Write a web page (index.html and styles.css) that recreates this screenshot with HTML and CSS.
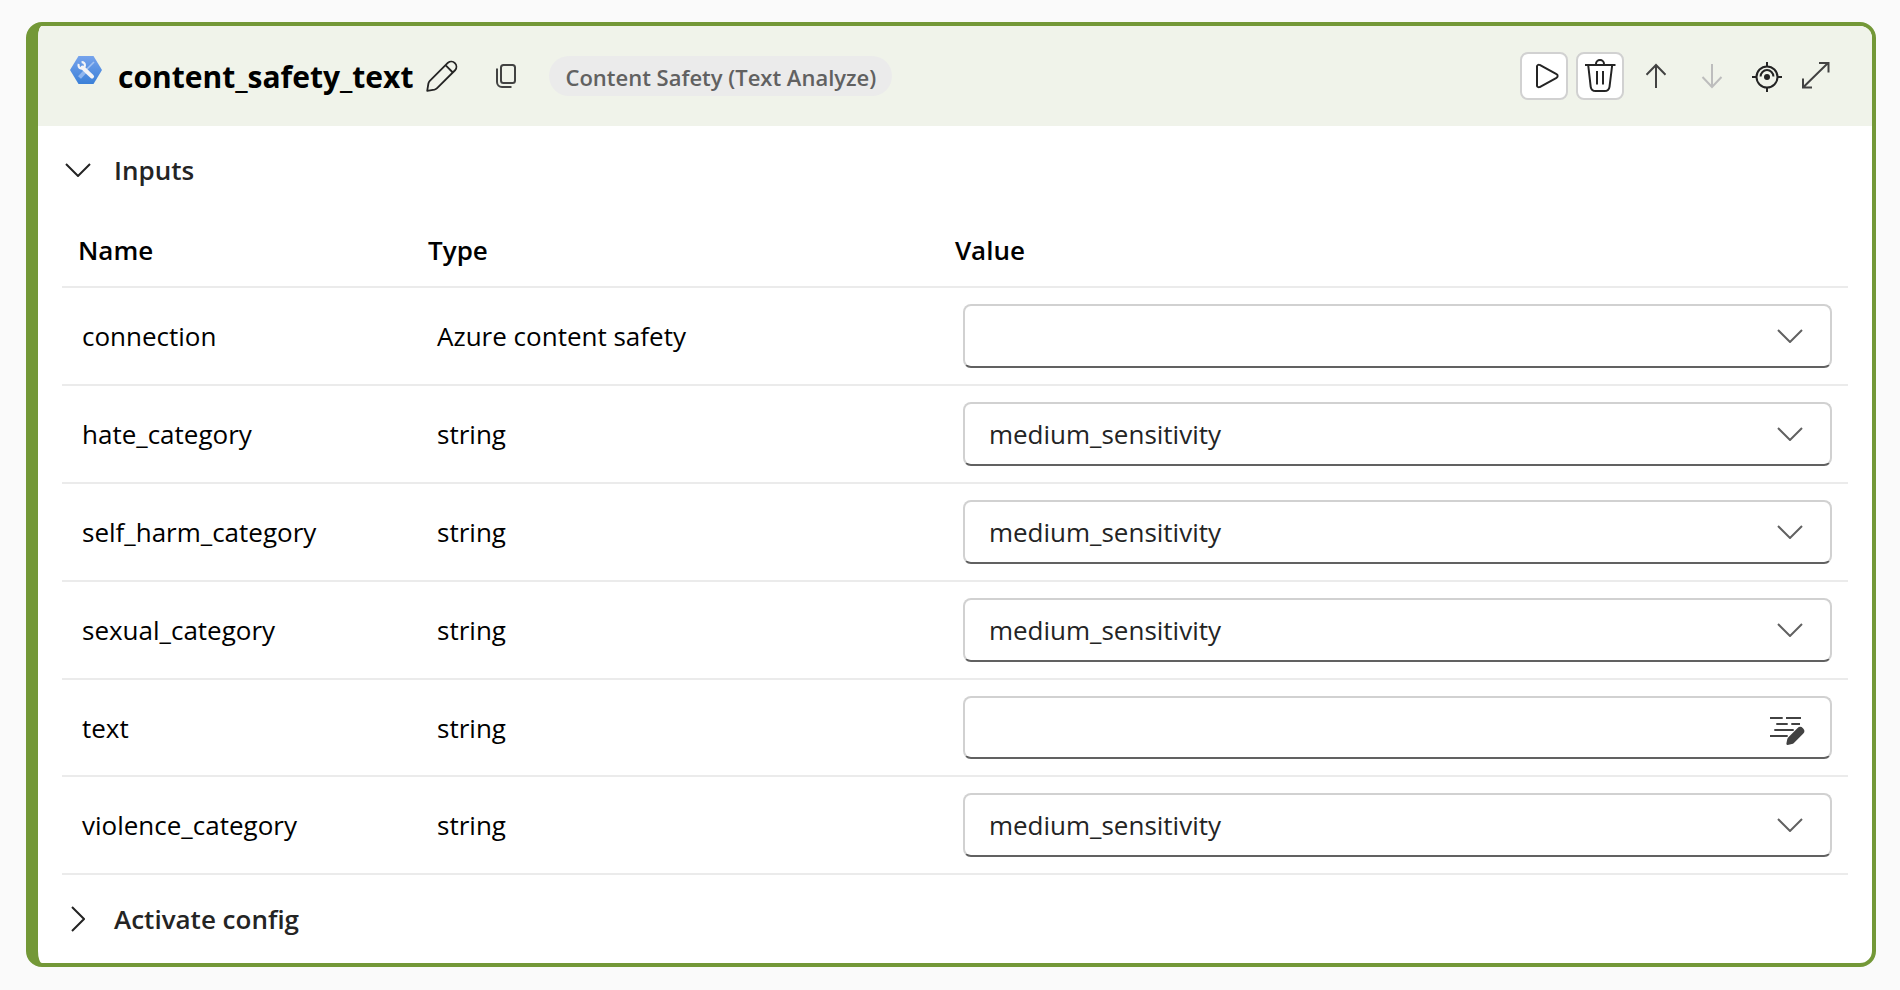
FILE: index.html
```html
<!DOCTYPE html>
<html lang="en">
<head>
<meta charset="utf-8">
<title>content_safety_text</title>
<link rel="stylesheet" href="styles.css">
</head>
<body>
<svg class="defs" aria-hidden="true">
  <symbol id="chevron" viewBox="0 0 26 14"><path d="M1 1l12 12L25 1" fill="none" stroke="currentColor" stroke-width="2"/></symbol>
</svg>
<main class="node">
  <header class="node-header">
    <svg class="tool-icon" viewBox="0 0 32 28" aria-hidden="true">
      <defs><linearGradient id="hex" x1="0" y1="0" x2="0" y2="1"><stop offset="0" stop-color="#76a3ec"/><stop offset="1" stop-color="#3b80d8"/></linearGradient></defs>
      <path d="M8.500 0h15L32 14l-8.500 14h-15L0 14z" fill="url(#hex)"/>
      <path d="M9.500 21.500L17 13.500" stroke="#8fb6ee" stroke-width="4"/>
      <path d="M16 14l8-8" stroke="#a3c3f2" stroke-width="1.600"/>
      <path d="M12.500 11.500L22 20.500" stroke="#f4f4f6" stroke-width="4" stroke-linecap="round"/>
      <path d="M8.800 8a3.200 3.200 0 1 0 2.800-1.900" fill="none" stroke="#f4f4f6" stroke-width="2.200"/>
    </svg>
    <h1 class="node-title">content_safety_text</h1>
    <button class="plain edit" type="button" aria-label="Rename">
      <svg width="32" height="32" viewBox="0 0 32 32"><path d="M1.200 30.800l1.200-7.300q.3-1.500 1.400-2.600L22 2.700a5.200 5.200 0 0 1 7.300 7.300L11.100 28.200q-1.100 1.100-2.600 1.400zM19.500 5.200l7.300 7.300" fill="none" stroke="currentColor" stroke-width="1.800" stroke-linejoin="round"/></svg>
    </button>
    <button class="plain copy" type="button" aria-label="Copy">
      <svg width="20" height="24" viewBox="0 0 20 24"><rect x="5" y="1" width="14" height="18" rx="2.500" fill="none" stroke="currentColor" stroke-width="2"/><path d="M1 4.500V18a5 5 0 0 0 5 5h9.500" fill="none" stroke="currentColor" stroke-width="2"/></svg>
    </button>
    <span class="chip">Content Safety (Text Analyze)</span>
    <div class="actions">
      <button class="action boxed" type="button" aria-label="Run"><svg viewBox="2 2 44 44"><path d="M17 14.600v18.800a1.800 1.800 0 0 0 2.700 1.600l16.800-9.200a2 2 0 0 0 0-3.600L19.700 13a1.800 1.800 0 0 0-2.700 1.600z"/></svg></button>
      <button class="action boxed" type="button" aria-label="Delete"><svg viewBox="2 2 44 44"><path d="M9 13h30.500M20 13v-1a4 4 0 0 1 8 0v1M12.200 13l2.500 21.800a5 5 0 0 0 5 4.200h8.800a5 5 0 0 0 5-4.200L36.200 13M21 19v13.500M27 19v13.500"/></svg></button>
      <button class="action soft" type="button" aria-label="Move up"><svg viewBox="0 0 48 48"><path d="M24 36V13M14.500 22.800L24 13l9.500 9.800"/></svg></button>
      <button class="action" type="button" aria-label="Move down" disabled><svg viewBox="0 0 48 48"><path d="M24 12v23.500M14.500 25L24 35l9.500-10"/></svg></button>
      <button class="action" type="button" aria-label="Locate"><svg viewBox="0 0 48 48"><circle cx="23" cy="25" r="10.500"/><path d="M8 25h4.500M33.500 25H38M23 10v4.500M23 35.500V40M16.600 24.500a6.400 6.400 0 0 1 12.800 0"/><circle class="dot" cx="23" cy="25" r="3"/></svg></button>
      <button class="action soft expand" type="button" aria-label="Expand"><svg viewBox="0 0 48 48"><path d="M11 35.500L36 11M27 11h9.500v9.500M11 26.500V35.500h9"/></svg></button>
    </div>
  </header>
  <section class="node-body">
    <button class="section-toggle" type="button" aria-expanded="true"><svg class="chevron" aria-hidden="true"><use href="#chevron"/></svg>Inputs</button>
    <table class="inputs">
      <thead><tr><th class="col-name" scope="col">Name</th><th class="col-type" scope="col">Type</th><th scope="col">Value</th></tr></thead>
      <tbody>
        <tr><td><label for="connection">connection</label></td><td>Azure content safety</td><td class="value"><div class="field"><select id="connection"><option></option></select><svg class="chevron" aria-hidden="true"><use href="#chevron"/></svg></div></td></tr>
        <tr><td><label for="hate">hate_category</label></td><td>string</td><td class="value"><div class="field"><select id="hate"><option>medium_sensitivity</option></select><svg class="chevron" aria-hidden="true"><use href="#chevron"/></svg></div></td></tr>
        <tr><td><label for="self-harm">self_harm_category</label></td><td>string</td><td class="value"><div class="field"><select id="self-harm"><option>medium_sensitivity</option></select><svg class="chevron" aria-hidden="true"><use href="#chevron"/></svg></div></td></tr>
        <tr><td><label for="sexual">sexual_category</label></td><td>string</td><td class="value"><div class="field"><select id="sexual"><option>medium_sensitivity</option></select><svg class="chevron" aria-hidden="true"><use href="#chevron"/></svg></div></td></tr>
        <tr><td><label for="text">text</label></td><td>string</td><td class="value"><div class="field"><input id="text" type="text"><button class="plain editor" type="button" aria-label="Open editor"><svg width="36" height="30" viewBox="0 0 36 30"><path d="M0 2h12.700M16 2h15M6.300 8h11.400M21.300 8H30M4.300 14h19.400M0 20h17.700" stroke="currentColor" stroke-width="2"/><path d="M16.400 27.600l.8-4.200q.3-1.200 1.200-2.100l9-9a3.900 3.900 0 0 1 5.700 5.500l-9.200 9.200q-.8.800-2 1.100l-4.200.8q-1.500.2-1.300-1.300z" fill="currentColor"/></svg></button></div></td></tr>
        <tr><td><label for="violence">violence_category</label></td><td>string</td><td class="value"><div class="field"><select id="violence"><option>medium_sensitivity</option></select><svg class="chevron" aria-hidden="true"><use href="#chevron"/></svg></div></td></tr>
      </tbody>
    </table>
    <button class="section-toggle" type="button" aria-expanded="false"><svg class="chevron" aria-hidden="true"><use href="#chevron"/></svg>Activate config</button>
  </section>
</main>
</body>
</html>
```
FILE: styles.css
```css
* {
  box-sizing: border-box;
}

body {
  margin: 0;
  padding: 22px 24px 22px 26px;
  background: #fafafa;
  color: #000;
  font-family: "Open Sans", "Noto Sans", sans-serif;
  font-size: 26px;
  line-height: 36px;
}

button {
  padding: 0;
  border: 0;
  background: none;
  color: #242424;
  font: inherit;
}

svg {
  display: block;
  flex: none;
}

.defs {
  position: absolute;
  width: 0;
  height: 0;
}

.node {
  overflow: hidden;
  border: 4px solid #739837;
  border-left-width: 12px;
  border-radius: 16px;
  background: #fff;
}

.node-header {
  display: flex;
  align-items: center;
  height: 100px;
  padding: 0 32px;
  background: #f0f3ea;
}

.tool-icon {
  width: 32px;
  height: 28px;
  margin: 0 16px 12px 0;
}

.node-title {
  margin: 0;
  padding-top: 2px;
  font-size: 30px;
  line-height: 40px;
  font-weight: 700;
}

.edit {
  margin-left: 13px;
}

.copy {
  margin: 0 33px 0 38px;
  color: #424242;
}

.chip {
  padding: 2px 16px 0;
  border-radius: 20px;
  background: #ebebeb;
  color: #616161;
  font-size: 22px;
  line-height: 38px;
  font-weight: 600;
  white-space: nowrap;
}

.actions {
  display: flex;
  gap: 8px;
  margin-left: auto;
}

.action {
  width: 48px;
  height: 48px;
}

.action svg {
  width: 100%;
  height: 100%;
  fill: none;
  stroke: currentColor;
  stroke-width: 2;
}

.action .dot {
  fill: currentColor;
  stroke: none;
}

.boxed {
  border: 2px solid #d1d1d1;
  border-radius: 8px;
  background: #fff;
}

.soft {
  color: #424242;
}

.action:disabled {
  color: #bdbdbd;
}

.expand {
  margin-left: -8px;
}

.node-body {
  padding: 0 24px;
}

.section-toggle {
  display: flex;
  align-items: center;
  gap: 23px;
  width: 100%;
  height: 88px;
  padding-left: 3px;
  font-weight: 600;
}

.chevron {
  width: 26px;
  height: 14px;
}

.section-toggle[aria-expanded="false"] .chevron {
  transform: rotate(-90deg);
}

.inputs {
  width: 100%;
  border-collapse: separate;
  border-spacing: 0;
  table-layout: fixed;
}

.inputs th {
  height: 74px;
  padding: 0 16px;
  border-bottom: 2px solid #ebebeb;
  font-weight: 600;
  text-align: left;
}

.inputs td {
  padding: 0 20px;
  border-bottom: 2px solid #ebebeb;
}

.inputs td + td {
  padding-left: 25px;
}

.inputs .value {
  padding: 16px 16px 16px 24px;
}

.col-name {
  width: 19.600%;
}

.col-type {
  width: 29.500%;
}

.field {
  position: relative;
}

.field select,
.field input {
  display: block;
  width: 100%;
  height: 64px;
  padding: 0 24px;
  appearance: none;
  border: 2px solid #d1d1d1;
  border-bottom-color: #616161;
  border-radius: 8px;
  background: #fff;
  color: #242424;
  font: inherit;
}

.field input {
  height: 63px;
}

.field .chevron {
  position: absolute;
  top: 25px;
  right: 29px;
  color: #616161;
  pointer-events: none;
}

.editor {
  position: absolute;
  top: 20px;
  right: 26px;
  color: #424242;
}
```
